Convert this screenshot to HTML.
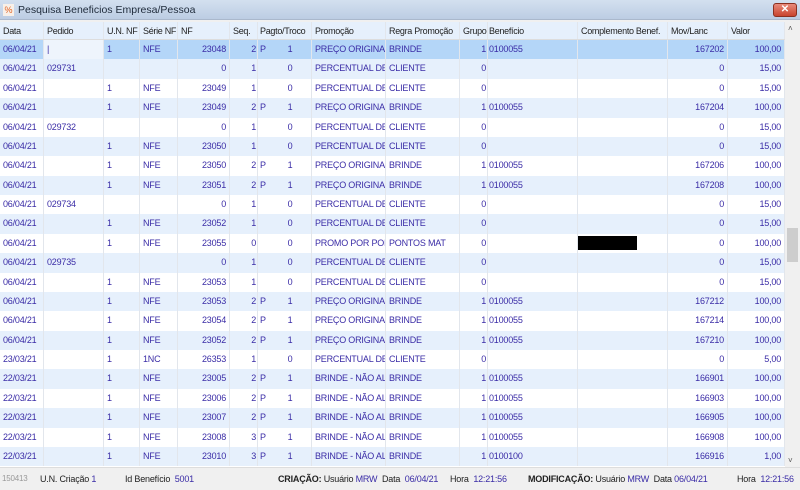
<!DOCTYPE html>
<html><head><meta charset="utf-8"><style>
*{margin:0;padding:0;box-sizing:border-box}
body{width:800px;height:490px;overflow:hidden;background:#f0f0f0;font-family:"Liberation Sans",sans-serif;font-size:9px;color:#3a2ca6;position:relative}
#title{position:absolute;left:0;top:0;width:800px;height:20px;background:linear-gradient(#d3e0ef,#bccde3);color:#1e2a3a;font-size:10.5px;line-height:20px;padding-left:18px;border-bottom:1px solid #aab8cc}
#ico{position:absolute;left:3px;top:4px;width:11px;height:12px;background:#f8f0e8;color:#e06020;font-size:9px;line-height:12px;text-align:center}
#close{position:absolute;left:773px;top:3px;width:24px;height:14px;background:linear-gradient(#e88a7a,#c8442e);border:1px solid #8a3020;border-radius:3px;color:#fff;font-size:10px;line-height:12px;text-align:center;font-weight:bold}
#grid{position:absolute;left:0;top:22px;width:785px;height:445px;background:#fff;overflow:hidden}
.r{display:flex;height:19.38px;line-height:19.38px;white-space:nowrap;letter-spacing:-0.2px}
.h{height:18px;line-height:18px;color:#222;background:#fff;border-bottom:1px solid #ddd;letter-spacing:-0.3px}
.r>span{display:block;overflow:hidden;border-right:1px solid #e2e6ec;padding:0 3px}
.r>span:nth-child(1){width:44px}.r>span:nth-child(2){width:60px}.r>span:nth-child(3){width:36px}.r>span:nth-child(4){width:38px}
.r>span:nth-child(5){width:52px;text-align:right}.r>span:nth-child(6){width:28px;text-align:right;padding-right:1px}
.r>span:nth-child(7){width:54px;display:flex;padding:0 2px}.r>span:nth-child(7) i{font-style:normal;width:20px}.r>span:nth-child(7) b{font-weight:normal;width:20px;text-align:center}
.r>span:nth-child(8){width:74px}.r>span:nth-child(9){width:74px}.r>span:nth-child(10){width:28px;text-align:right;padding-right:1px}
.r>span:nth-child(11){width:90px;padding-left:1px}.r>span:nth-child(12){width:90px}.r>span:nth-child(13){width:60px;text-align:right}.r>span:nth-child(14){width:57px;text-align:right}
.h>span{text-align:left!important}
.r:nth-child(odd){background:#e6f0fc}
.sel{background:#b4d6f8!important}
#sb{position:absolute;left:785px;top:22px;width:15px;height:445px;background:#f0f0f0}
#thumb{position:absolute;left:787px;top:228px;width:11px;height:34px;background:#cdcdcd}
#blk{position:absolute;left:578px;top:236px;width:59px;height:14px;background:#000}
#st{position:absolute;left:0;top:467px;width:800px;height:23px;background:#f0f0f0;border-top:1px solid #ddd;line-height:22px;font-size:9px;color:#222;white-space:nowrap;letter-spacing:-0.2px}
#st span{position:absolute}
#st .v{color:#3a2ca6}
</style></head><body>
<div id="title"><div id="ico">%</div>Pesquisa Beneficios Empresa/Pessoa</div>
<div id="close">✕</div>
<div id="grid">
<div class="r h"><span>Data</span><span>Pedido</span><span>U.N. NF</span><span>Série NF</span><span>NF</span><span>Seq.</span><span style="display:block">Pagto/Troco</span><span>Promoção</span><span>Regra Promoção</span><span>Grupo</span><span>Benefício</span><span>Complemento Benef.</span><span>Mov/Lanc</span><span>Valor</span></div>
<div class="r sel"><span>06/04/21</span><span style="background:#eef4fc">|</span><span>1</span><span>NFE</span><span>23048</span><span>2</span><span><i>P</i><b>1</b></span><span>PREÇO ORIGINAL</span><span>BRINDE</span><span>1</span><span>0100055</span><span></span><span>167202</span><span>100,00</span></div>
<div class="r"><span>06/04/21</span><span>029731</span><span></span><span></span><span>0</span><span>1</span><span><i></i><b>0</b></span><span>PERCENTUAL DE DESC</span><span>CLIENTE</span><span>0</span><span></span><span></span><span>0</span><span>15,00</span></div>
<div class="r"><span>06/04/21</span><span></span><span>1</span><span>NFE</span><span>23049</span><span>1</span><span><i></i><b>0</b></span><span>PERCENTUAL DE DESC</span><span>CLIENTE</span><span>0</span><span></span><span></span><span>0</span><span>15,00</span></div>
<div class="r"><span>06/04/21</span><span></span><span>1</span><span>NFE</span><span>23049</span><span>2</span><span><i>P</i><b>1</b></span><span>PREÇO ORIGINAL</span><span>BRINDE</span><span>1</span><span>0100055</span><span></span><span>167204</span><span>100,00</span></div>
<div class="r"><span>06/04/21</span><span>029732</span><span></span><span></span><span>0</span><span>1</span><span><i></i><b>0</b></span><span>PERCENTUAL DE DESC</span><span>CLIENTE</span><span>0</span><span></span><span></span><span>0</span><span>15,00</span></div>
<div class="r"><span>06/04/21</span><span></span><span>1</span><span>NFE</span><span>23050</span><span>1</span><span><i></i><b>0</b></span><span>PERCENTUAL DE DESC</span><span>CLIENTE</span><span>0</span><span></span><span></span><span>0</span><span>15,00</span></div>
<div class="r"><span>06/04/21</span><span></span><span>1</span><span>NFE</span><span>23050</span><span>2</span><span><i>P</i><b>1</b></span><span>PREÇO ORIGINAL</span><span>BRINDE</span><span>1</span><span>0100055</span><span></span><span>167206</span><span>100,00</span></div>
<div class="r"><span>06/04/21</span><span></span><span>1</span><span>NFE</span><span>23051</span><span>2</span><span><i>P</i><b>1</b></span><span>PREÇO ORIGINAL</span><span>BRINDE</span><span>1</span><span>0100055</span><span></span><span>167208</span><span>100,00</span></div>
<div class="r"><span>06/04/21</span><span>029734</span><span></span><span></span><span>0</span><span>1</span><span><i></i><b>0</b></span><span>PERCENTUAL DE DESC</span><span>CLIENTE</span><span>0</span><span></span><span></span><span>0</span><span>15,00</span></div>
<div class="r"><span>06/04/21</span><span></span><span>1</span><span>NFE</span><span>23052</span><span>1</span><span><i></i><b>0</b></span><span>PERCENTUAL DE DESC</span><span>CLIENTE</span><span>0</span><span></span><span></span><span>0</span><span>15,00</span></div>
<div class="r"><span>06/04/21</span><span></span><span>1</span><span>NFE</span><span>23055</span><span>0</span><span><i></i><b>0</b></span><span>PROMO POR PONTOS</span><span>PONTOS MAT</span><span>0</span><span></span><span></span><span>0</span><span>100,00</span></div>
<div class="r"><span>06/04/21</span><span>029735</span><span></span><span></span><span>0</span><span>1</span><span><i></i><b>0</b></span><span>PERCENTUAL DE DESC</span><span>CLIENTE</span><span>0</span><span></span><span></span><span>0</span><span>15,00</span></div>
<div class="r"><span>06/04/21</span><span></span><span>1</span><span>NFE</span><span>23053</span><span>1</span><span><i></i><b>0</b></span><span>PERCENTUAL DE DESC</span><span>CLIENTE</span><span>0</span><span></span><span></span><span>0</span><span>15,00</span></div>
<div class="r"><span>06/04/21</span><span></span><span>1</span><span>NFE</span><span>23053</span><span>2</span><span><i>P</i><b>1</b></span><span>PREÇO ORIGINAL</span><span>BRINDE</span><span>1</span><span>0100055</span><span></span><span>167212</span><span>100,00</span></div>
<div class="r"><span>06/04/21</span><span></span><span>1</span><span>NFE</span><span>23054</span><span>2</span><span><i>P</i><b>1</b></span><span>PREÇO ORIGINAL</span><span>BRINDE</span><span>1</span><span>0100055</span><span></span><span>167214</span><span>100,00</span></div>
<div class="r"><span>06/04/21</span><span></span><span>1</span><span>NFE</span><span>23052</span><span>2</span><span><i>P</i><b>1</b></span><span>PREÇO ORIGINAL</span><span>BRINDE</span><span>1</span><span>0100055</span><span></span><span>167210</span><span>100,00</span></div>
<div class="r"><span>23/03/21</span><span></span><span>1</span><span>1NC</span><span>26353</span><span>1</span><span><i></i><b>0</b></span><span>PERCENTUAL DE DESC</span><span>CLIENTE</span><span>0</span><span></span><span></span><span>0</span><span>5,00</span></div>
<div class="r"><span>22/03/21</span><span></span><span>1</span><span>NFE</span><span>23005</span><span>2</span><span><i>P</i><b>1</b></span><span>BRINDE - NÃO ALTERA</span><span>BRINDE</span><span>1</span><span>0100055</span><span></span><span>166901</span><span>100,00</span></div>
<div class="r"><span>22/03/21</span><span></span><span>1</span><span>NFE</span><span>23006</span><span>2</span><span><i>P</i><b>1</b></span><span>BRINDE - NÃO ALTERA</span><span>BRINDE</span><span>1</span><span>0100055</span><span></span><span>166903</span><span>100,00</span></div>
<div class="r"><span>22/03/21</span><span></span><span>1</span><span>NFE</span><span>23007</span><span>2</span><span><i>P</i><b>1</b></span><span>BRINDE - NÃO ALTERA</span><span>BRINDE</span><span>1</span><span>0100055</span><span></span><span>166905</span><span>100,00</span></div>
<div class="r"><span>22/03/21</span><span></span><span>1</span><span>NFE</span><span>23008</span><span>3</span><span><i>P</i><b>1</b></span><span>BRINDE - NÃO ALTERA</span><span>BRINDE</span><span>1</span><span>0100055</span><span></span><span>166908</span><span>100,00</span></div>
<div class="r"><span>22/03/21</span><span></span><span>1</span><span>NFE</span><span>23010</span><span>3</span><span><i>P</i><b>1</b></span><span>BRINDE - NÃO ALTERA</span><span>BRINDE</span><span>1</span><span>0100100</span><span></span><span>166916</span><span>1,00</span></div>
</div>
<div id="sb"><div style="position:absolute;left:3px;top:2px;font-size:8px;color:#555">˄</div><div style="position:absolute;left:3px;bottom:2px;font-size:8px;color:#555">˅</div></div>
<div id="thumb"></div>
<div id="blk"></div>
<div id="st">
<span style="left:2px;color:#999;font-size:8px">150413</span>
<span style="left:40px">U.N. Criação <span class="v" style="position:static">1</span></span>
<span style="left:125px">Id Benefício <span class="v" style="position:static">&nbsp;5001</span></span>
<span style="left:278px"><b>CRIAÇÃO:</b> Usuário <span class="v" style="position:static">MRW</span>&nbsp; Data&nbsp; <span class="v" style="position:static">06/04/21</span></span>
<span style="left:450px">Hora&nbsp; <span class="v" style="position:static">12:21:56</span></span>
<span style="left:528px"><b>MODIFICAÇÃO:</b> Usuário <span class="v" style="position:static">MRW</span>&nbsp; Data <span class="v" style="position:static">06/04/21</span></span>
<span style="left:737px">Hora&nbsp; <span class="v" style="position:static">12:21:56</span></span>
</div>
</body></html>
